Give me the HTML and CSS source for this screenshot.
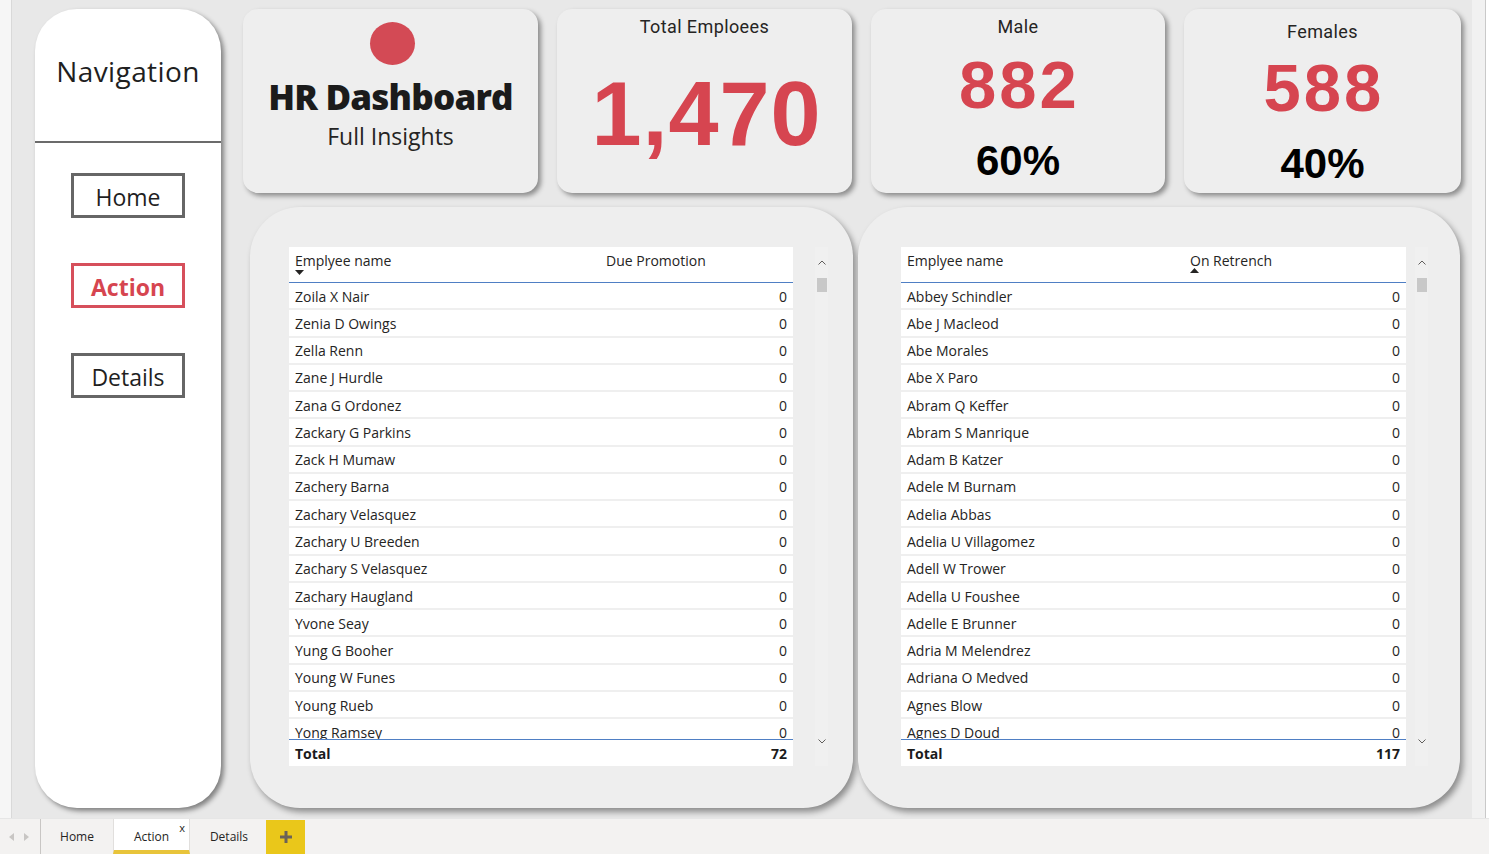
FILE: index.html
```html
<!DOCTYPE html>
<html>
<head>
<meta charset="utf-8">
<title>HR Dashboard</title>
<link rel="stylesheet" href="styles.css">
</head>
<body>
<div class="app">
  <div class="main">
    <div class="gutter-left"></div>
    <div class="canvas">
      <aside class="nav">
        <div class="nav-head">Navigation</div>
        <div class="nav-buttons">
          <div class="nav-btn">Home</div>
          <div class="nav-btn active">Action</div>
          <div class="nav-btn">Details</div>
        </div>
      </aside>
      <div class="content">
        <div class="cards">
          <div class="card title-card">
            <div class="dot"></div>
            <div class="title">HR Dashboard</div>
            <div class="subtitle">Full Insights</div>
          </div>
          <div class="card kpi">
            <div class="kpi-label">Total Emploees</div>
            <div class="kpi-big total">1,470</div>
          </div>
          <div class="card kpi male">
            <div class="kpi-label">Male</div>
            <div class="kpi-num">882</div>
            <div class="kpi-pct">60%</div>
          </div>
          <div class="card kpi females">
            <div class="kpi-label">Females</div>
            <div class="kpi-num">588</div>
            <div class="kpi-pct">40%</div>
          </div>
        </div>
        <div class="panels">
          <div class="panel left">
            <div class="table t-left">
              <div class="thead">
                <div class="th c1">Emplyee name<svg class="sort" width="9" height="5" viewBox="0 0 9 5"><polygon points="0,0 9,0 4.5,5" fill="#252423"/></svg></div>
                <div class="th c2">Due Promotion</div>
              </div>
              <div class="tbody">
                <div class="tr"><span>Zoila X Nair</span><span>0</span></div>
                <div class="tr"><span>Zenia D Owings</span><span>0</span></div>
                <div class="tr"><span>Zella Renn</span><span>0</span></div>
                <div class="tr"><span>Zane J Hurdle</span><span>0</span></div>
                <div class="tr"><span>Zana G Ordonez</span><span>0</span></div>
                <div class="tr"><span>Zackary G Parkins</span><span>0</span></div>
                <div class="tr"><span>Zack H Mumaw</span><span>0</span></div>
                <div class="tr"><span>Zachery Barna</span><span>0</span></div>
                <div class="tr"><span>Zachary Velasquez</span><span>0</span></div>
                <div class="tr"><span>Zachary U Breeden</span><span>0</span></div>
                <div class="tr"><span>Zachary S Velasquez</span><span>0</span></div>
                <div class="tr"><span>Zachary Haugland</span><span>0</span></div>
                <div class="tr"><span>Yvone Seay</span><span>0</span></div>
                <div class="tr"><span>Yung G Booher</span><span>0</span></div>
                <div class="tr"><span>Young W Funes</span><span>0</span></div>
                <div class="tr"><span>Young Rueb</span><span>0</span></div>
                <div class="tr"><span>Yong Ramsey</span><span>0</span></div>
              </div>
              <div class="tfoot"><span>Total</span><span>72</span></div>
            </div>
            <div class="scrollbar">
              <svg width="8" height="5" viewBox="0 0 8 5"><polyline points="0.5,4.5 4,1 7.5,4.5" fill="none" stroke="#605e5c" stroke-width="1"/></svg>
              <div class="thumb"></div>
              <div class="track-fill"></div>
              <svg class="down" width="8" height="5" viewBox="0 0 8 5"><polyline points="0.5,0.5 4,4 7.5,0.5" fill="none" stroke="#605e5c" stroke-width="1"/></svg>
            </div>
          </div>
          <div class="panel right">
            <div class="table t-right">
              <div class="thead">
                <div class="th c1">Emplyee name</div>
                <div class="th c2">On Retrench<svg class="sort" width="9" height="5" viewBox="0 0 9 5"><polygon points="0,5 9,5 4.5,0" fill="#252423"/></svg></div>
              </div>
              <div class="tbody">
                <div class="tr"><span>Abbey Schindler</span><span>0</span></div>
                <div class="tr"><span>Abe J Macleod</span><span>0</span></div>
                <div class="tr"><span>Abe Morales</span><span>0</span></div>
                <div class="tr"><span>Abe X Paro</span><span>0</span></div>
                <div class="tr"><span>Abram Q Keffer</span><span>0</span></div>
                <div class="tr"><span>Abram S Manrique</span><span>0</span></div>
                <div class="tr"><span>Adam B Katzer</span><span>0</span></div>
                <div class="tr"><span>Adele M Burnam</span><span>0</span></div>
                <div class="tr"><span>Adelia Abbas</span><span>0</span></div>
                <div class="tr"><span>Adelia U Villagomez</span><span>0</span></div>
                <div class="tr"><span>Adell W Trower</span><span>0</span></div>
                <div class="tr"><span>Adella U Foushee</span><span>0</span></div>
                <div class="tr"><span>Adelle E Brunner</span><span>0</span></div>
                <div class="tr"><span>Adria M Melendrez</span><span>0</span></div>
                <div class="tr"><span>Adriana O Medved</span><span>0</span></div>
                <div class="tr"><span>Agnes Blow</span><span>0</span></div>
                <div class="tr"><span>Agnes D Doud</span><span>0</span></div>
              </div>
              <div class="tfoot"><span>Total</span><span>117</span></div>
            </div>
            <div class="scrollbar">
              <svg width="8" height="5" viewBox="0 0 8 5"><polyline points="0.5,4.5 4,1 7.5,4.5" fill="none" stroke="#605e5c" stroke-width="1"/></svg>
              <div class="thumb"></div>
              <div class="track-fill"></div>
              <svg class="down" width="8" height="5" viewBox="0 0 8 5"><polyline points="0.5,0.5 4,4 7.5,0.5" fill="none" stroke="#605e5c" stroke-width="1"/></svg>
            </div>
          </div>
        </div>
      </div>
    </div>
    <div class="gutter-right"></div>
  </div>
  <div class="tabbar">
    <div class="tab-arrows">
      <svg width="5" height="8" viewBox="0 0 5 8"><polygon points="5,0 5,8 0,4" fill="#c8c6c4"/></svg>
      <svg width="5" height="8" viewBox="0 0 5 8"><polygon points="0,0 0,8 5,4" fill="#c8c6c4"/></svg>
    </div>
    <div class="tab">Home</div>
    <div class="tab active">Action<span class="close">x</span></div>
    <div class="tab tab-details">Details</div>
    <div class="tab-add">
      <svg width="12" height="12" viewBox="0 0 12 12"><rect x="4.5" y="0" width="3" height="12" fill="#6b6258"/><rect x="0" y="4.5" width="12" height="3" fill="#6b6258"/></svg>
    </div>
  </div>
</div>
</body>
</html>
```

FILE: styles.css
```css
* { box-sizing: border-box; }
html, body { margin: 0; padding: 0; }
body {
  width: 1489px;
  height: 854px;
  overflow: hidden;
  background: #ffffff;
  font-family: "Open Sans", "Noto Sans", sans-serif;
  color: #252423;
}
.app { display: flex; flex-direction: column; width: 1489px; height: 854px; }
.main { display: flex; height: 818px; }
.gutter-left { width: 12px; background: #f6f6f6; border-right: 1px solid #d9d9d9; }
.gutter-right { width: 17px; background: #f1f1f1; border-right: 3px solid #ffffff; box-shadow: inset -1px 0 0 #c9c9c9; }
.canvas {
  width: 1460px;
  background: #e8e8e8;
  display: flex;
  padding: 9px 0 10px 23px;
}

/* navigation */
.nav {
  width: 186px;
  height: 799px;
  background: #ffffff;
  border-radius: 42px;
  box-shadow: 3px 3px 5px rgba(0,0,0,0.45);
  display: flex;
  flex-direction: column;
}
.nav-head {
  height: 134px;
  border-bottom: 2px solid #6b6b6b;
  display: flex;
  align-items: center;
  justify-content: center;
  padding-bottom: 8px;
  font-size: 28px;
  color: #1f1f1f;
  letter-spacing: 0.4px;
}
.nav-buttons {
  display: flex;
  flex-direction: column;
  align-items: center;
  gap: 45px;
  padding-top: 30px;
}
.nav-btn {
  width: 114px;
  height: 45px;
  border: 3px solid #666666;
  display: flex;
  align-items: center;
  justify-content: center;
  padding-top: 3px;
  font-size: 23px;
  color: #1f1f1f;
}
.nav-btn.active { border-color: #d64f5b; color: #d64550; font-weight: 700; }

/* content */
.content { margin-left: 22px; display: flex; flex-direction: column; }
.cards {
  display: grid;
  grid-template-columns: 295px 295px 294px 277px;
  column-gap: 19px;
  height: 184px;
}
.card {
  background: #eeeeee;
  border-radius: 15px;
  box-shadow: 3px 3px 5px rgba(0,0,0,0.4);
  display: flex;
  flex-direction: column;
  align-items: center;
}
.title-card { padding-top: 13px; }
.dot { width: 45px; height: 43px; border-radius: 50%; background: #d34a55; margin-left: 4px; }
.title { font-weight: 800; font-size: 35px; line-height: 44px; margin-top: 10px; color: #1b1b1b; letter-spacing: -0.8px; }
.subtitle { font-size: 23px; line-height: 30px; margin-top: 2px; color: #252423; }

.kpi-label { font-family: "Roboto", sans-serif; font-size: 18px; line-height: 22px; margin-top: 7px; color: #252423; letter-spacing: 0.4px; }
.females .kpi-label { margin-top: 12px; }
.kpi-big {
  font-family: "Liberation Sans", Arial, sans-serif;
  font-weight: 700;
  color: #d64550;
  font-size: 90px;
  line-height: 90px;
  margin-top: 31px;
  margin-left: 4px;
  letter-spacing: 1px;
}
.kpi-num {
  font-family: "Liberation Sans", Arial, sans-serif;
  font-weight: 700;
  color: #d64550;
  font-size: 67px;
  line-height: 70px;
  margin-top: 12px;
  letter-spacing: 3px;
  padding-left: 3px;
}
.kpi-pct {
  font-family: "Liberation Sans", Arial, sans-serif;
  font-weight: 700;
  color: #000000;
  font-size: 42px;
  line-height: 46px;
  margin-top: 18px;
}
.females .kpi-num { margin-top: 10px; }
.females .kpi-pct { margin-top: 18px; }

/* panels */
.panels { display: flex; gap: 5px; margin-top: 14px; margin-left: 7px; }
.panel {
  width: 603px;
  height: 601px;
  background: #eeeeee;
  border-radius: 50px;
  box-shadow: 3px 4px 6px rgba(0,0,0,0.4);
  display: flex;
  padding: 40px 0 0 39px;
}
.panel.right { width: 602px; padding-left: 43px; }
.table { width: 504px; display: flex; flex-direction: column; font-size: 14px; }
.t-right { width: 505px; }
.thead {
  height: 36px;
  background: #ffffff;
  border-bottom: 1px solid #4f7fc4;
  display: flex;
}
.th { position: relative; padding: 5px 6px 0 6px; line-height: 18px; color: #252423; }
.t-left .c1 { width: 311px; }
.t-right .c1 { width: 283px; }
.sort { position: absolute; left: 6px; top: 23px; }
.t-right .sort { left: 6px; top: 21px; }
.tbody { height: 456px; overflow: hidden; }
.tr {
  height: 27.27px;
  background: #ffffff;
  border-bottom: 2px solid #efefef;
  display: flex;
  justify-content: space-between;
  align-items: center;
  padding: 1px 6px 0 6px;
  color: #252423;
}
.tfoot {
  height: 27px;
  background: #ffffff;
  border-top: 1px solid #4f7fc4;
  display: flex;
  justify-content: space-between;
  align-items: center;
  padding: 0 6px;
  font-weight: 700;
  color: #1b1b1b;
}
.scrollbar {
  width: 13px;
  height: 519px;
  margin-left: 22px;
  background: #f0f0f0;
  display: flex;
  flex-direction: column;
  align-items: center;
  padding-top: 13px;
}
.panel.right .scrollbar { margin-left: 9px; }
.thumb { width: 10px; height: 14px; background: #c8c8c8; margin-top: 13px; }
.track-fill { flex: 1; }
.scrollbar .down { margin-bottom: 22px; }

/* tab bar */
.tabbar {
  height: 36px;
  background: #f3f2f1;
  border-top: 1px solid #e6e6e6;
  display: flex;
  font-family: "Open Sans", sans-serif;
  font-size: 12px;
  color: #252423;
}
.tab-arrows {
  width: 41px;
  border-right: 1px solid #c8c6c4;
  display: flex;
  align-items: center;
  justify-content: space-around;
  padding: 0 6px 0 4px;
  margin: 0;
}
.tab {
  width: 72px;
  display: flex;
  align-items: center;
  justify-content: center;
}
.tab.active {
  position: relative;
  width: 77px;
  background: #ffffff;
  border-left: 1px solid #e1dfdd;
  border-right: 1px solid #e1dfdd;
  border-bottom: 4px solid #e8c43a;
  padding-top: 3px;
}
.close { position: absolute; right: 4px; top: 1px; font-size: 11px; }
.tab.tab-details { width: 76px; padding-left: 2px; }
.tab-add {
  width: 39px;
  height: 34px;
  margin-top: 1px;
  background: #eac71a;
  display: flex;
  align-items: center;
  justify-content: center;
}
```
